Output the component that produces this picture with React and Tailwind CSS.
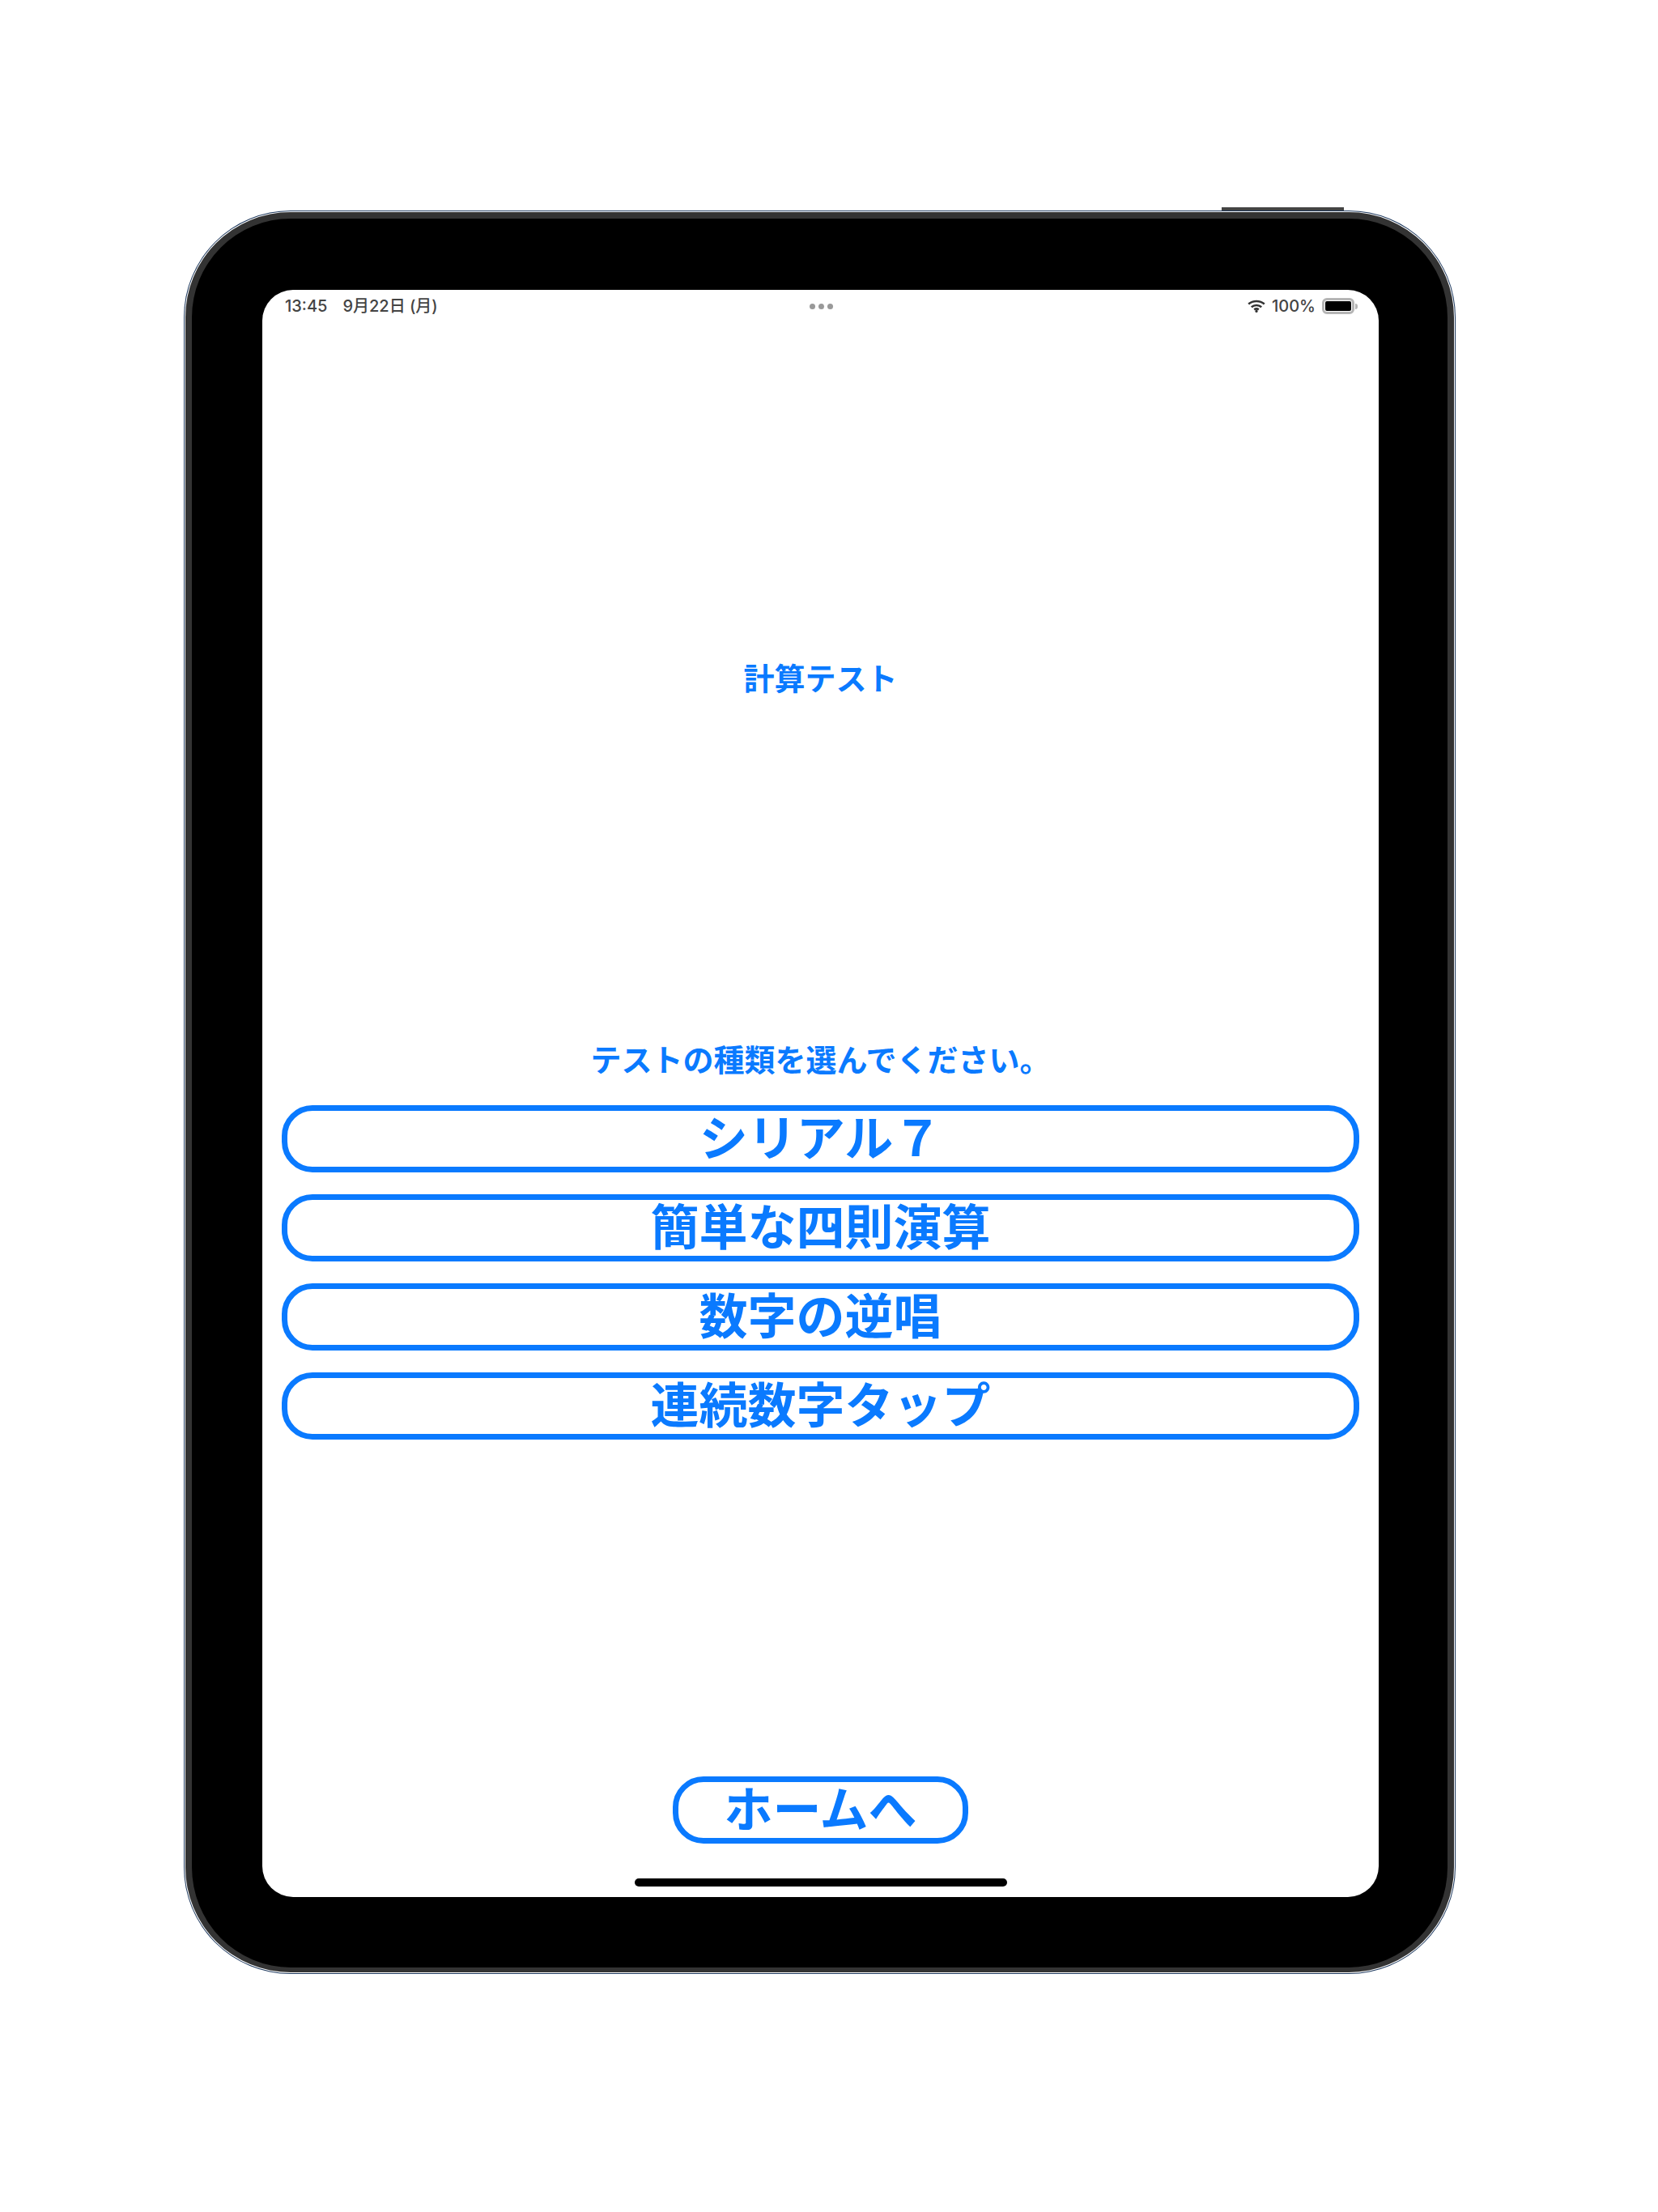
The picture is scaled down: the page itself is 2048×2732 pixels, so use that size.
const TESTS = ['シリアル７', '簡単な四則演算', '数字の逆唱', '連続数字タップ']

function WifiIcon() {
  return (
    <svg width="22" height="16" viewBox="0 0 22 16" fill="none" stroke="#333" strokeWidth="2.6">
      <path d="M1.2 5.600C6.700 .8 15.300 .8 20.800 5.600" />
      <path d="M4.800 9.200c3.600-3 8.800-3 12.400 0" />
      <path d="M8.200 12.400c1.700-1.200 3.900-1.200 5.600 0" />
      <circle cx="11" cy="14.400" r="1.600" fill="#333" stroke="none" />
    </svg>
  )
}

function Battery() {
  return (
    <div className="flex items-center gap-[1px]">
      <div className="w-[40px] h-[20px] rounded-[6px] border-[3px] border-[#b5b5b5] p-[1px]">
        <div className="w-full h-full rounded-[2px] bg-black"></div>
      </div>
      <div className="w-[3px] h-[7px] rounded-r-sm bg-[#b5b5b5]"></div>
    </div>
  )
}

function StatusBar() {
  return (
    <div className="grid grid-cols-3 items-center h-[38px] pt-[2px] pl-[28px] pr-[26px] text-[20px] font-medium text-[#444] font-['Inter','Noto_Sans_CJK_JP',sans-serif]">
      <div className="flex gap-[19px]">
        <span>13:45</span>
        <span>9月22日 (月)</span>
      </div>
      <div className="flex justify-center gap-[4px]">
        <span className="w-[7px] h-[7px] rounded-full bg-[#999]"></span>
        <span className="w-[7px] h-[7px] rounded-full bg-[#999]"></span>
        <span className="w-[7px] h-[7px] rounded-full bg-[#999]"></span>
      </div>
      <div className="flex justify-end items-center gap-[8px]">
        <WifiIcon />
        <span>100%</span>
        <Battery />
      </div>
    </div>
  )
}

function PillButton({ label, className }) {
  return (
    <button className={`h-[83px] pb-[9px] rounded-[38px] border-[7px] border-[#0a7aff] bg-white flex items-center justify-center text-[60px] leading-none font-bold text-[#0a7aff] ${className}`}>
      {label}
    </button>
  )
}

export default function App() {
  return (
    <div className="min-h-[2732px] bg-white pt-[262px] pl-[229px] font-['Noto_Sans_CJK_JP','Liberation_Sans',sans-serif]">
      <div className="relative w-[1567px] h-[2174px] rounded-[130px] bg-black border-[8px] border-b-[6px] border-[#333] pt-[88px] pl-[87px] shadow-[0_0_0_1px_#fff,0_0_0_2px_#1f3a5f]">
        <div className="absolute -top-[14px] left-[1272px] w-[151px] h-[4px] bg-[#444]"></div>
        <div className="w-[1379px] h-[1985px] rounded-[38px] bg-white flex flex-col overflow-hidden">
          <StatusBar />
          <p className="mt-[415px] text-center text-[38px] leading-[50px] font-bold text-[#0a7aff]">計算テスト</p>
          <p className="mt-[421px] text-center text-[38px] leading-[50px] font-bold text-[#0a7aff]">テストの種類を選んでください。</p>
          <div className="mt-[33px] px-[24px] flex flex-col gap-[27px]">
            {TESTS.map(t => (
              <PillButton key={t} label={t} className="w-full" />
            ))}
          </div>
          <div className="mt-auto flex flex-col items-center">
            <PillButton label="ホームへ" className="w-[365px]" />
            <div className="mt-[43px] mb-[13px] w-[460px] h-[10px] rounded-full bg-black"></div>
          </div>
        </div>
      </div>
    </div>
  )
}
